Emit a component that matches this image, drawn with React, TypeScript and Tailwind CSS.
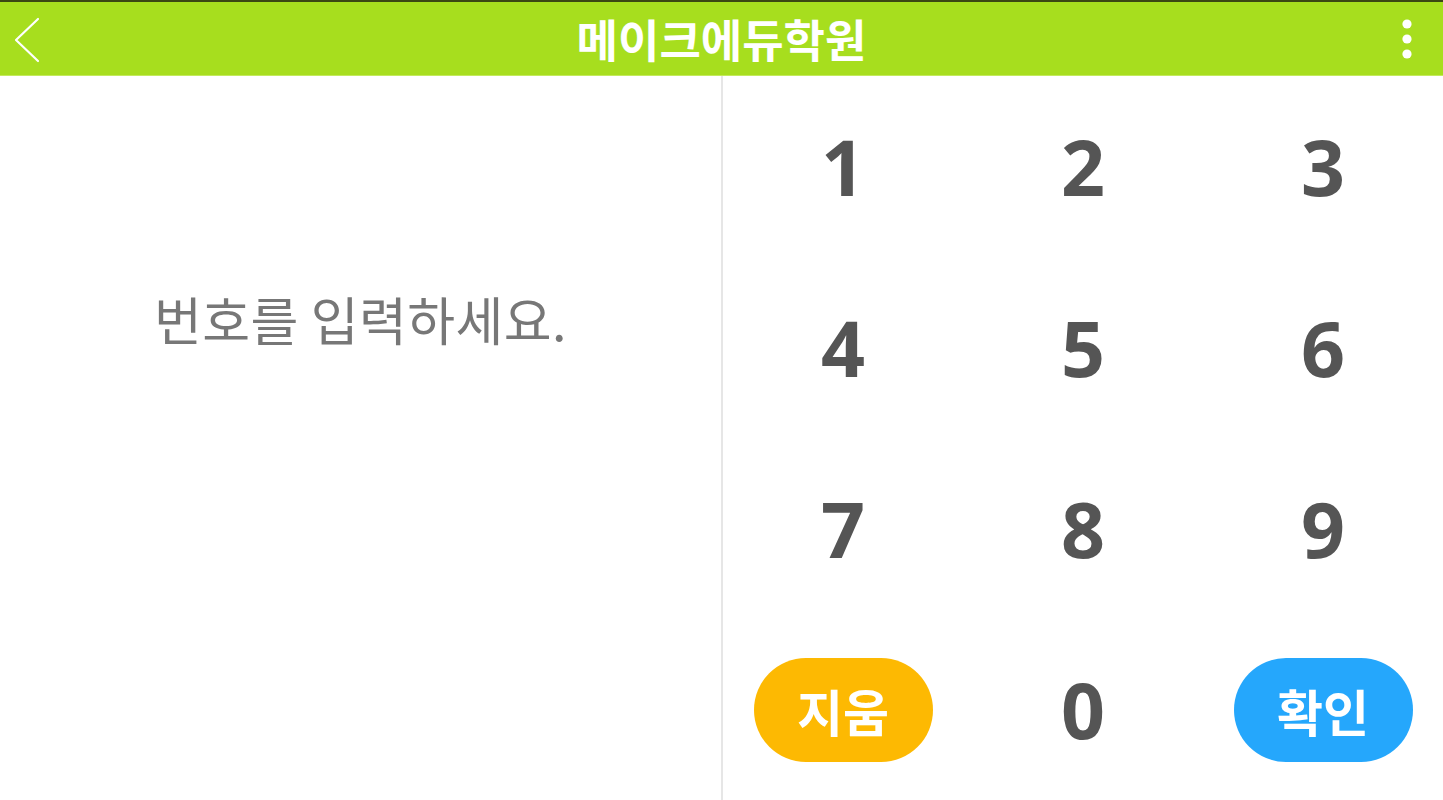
const KR = "font-['Noto_Sans_CJK_KR','Noto_Sans',sans-serif]"
const DIGIT = "font-['Open_Sans','Noto_Sans',sans-serif]"

function BackIcon() {
  return (
    <svg width="30" height="50" viewBox="0 0 30 50" fill="none">
      <path d="M25 5 L3 26 L25 47" stroke="white" strokeWidth="2.2" strokeLinecap="round" strokeLinejoin="round" />
    </svg>
  )
}

function MoreIcon() {
  return (
    <svg width="12" height="46" viewBox="0 0 12 46">
      <circle cx="6" cy="8" r="4.6" fill="white" />
      <circle cx="6" cy="23" r="4.6" fill="white" />
      <circle cx="6" cy="38" r="4.6" fill="white" />
    </svg>
  )
}

export default function App() {
  const digits = ["1", "2", "3", "4", "5", "6", "7", "8", "9"]

  return (
    <div className="flex h-[800px] w-[1443px] flex-col overflow-hidden bg-white">
      {/* header */}
      <div className="flex h-[76px] items-center justify-between border-t-2 border-b border-t-[#3b4713] border-b-[#c3ea5c] bg-[#a7de1e] px-[13px]">
        <div className="flex w-[40px] items-center pt-[1px]">
          <BackIcon />
        </div>
        <h1 className={`${KR} text-[45px] font-bold leading-none text-white`}>메이크에듀학원</h1>
        <div className="flex w-[40px] justify-end pr-[17px] pt-[1px]">
          <MoreIcon />
        </div>
      </div>

      <div className="flex flex-1">
        {/* left */}
        <div className="flex w-[723px] justify-center border-r-2 border-[#e6e6e6] pt-[217px]">
          <p className={`${KR} text-[52px] font-normal leading-none tracking-[0.4px] text-[#777777]`}>번호를 입력하세요.</p>
        </div>

        {/* keypad */}
        <div className="grid flex-1 grid-cols-3 grid-rows-4">
          {digits.map((d) => (
            <div key={d} className="flex items-center justify-center">
              <span className={`${DIGIT} text-[77px] font-bold text-[#555555]`}>{d}</span>
            </div>
          ))}
          <div className="flex items-center justify-center">
            <button className={`${KR} flex h-[104px] w-[179px] items-center justify-center rounded-full bg-[#fdb902] text-[50px] font-bold leading-none text-white`}>
              지움
            </button>
          </div>
          <div className="flex items-center justify-center">
            <span className={`${DIGIT} text-[77px] font-bold text-[#555555]`}>0</span>
          </div>
          <div className="flex items-center justify-center">
            <button className={`${KR} flex h-[104px] w-[179px] items-center justify-center rounded-full bg-[#25a7fc] text-[50px] font-bold leading-none text-white`}>
              확인
            </button>
          </div>
        </div>
      </div>
    </div>
  )
}
